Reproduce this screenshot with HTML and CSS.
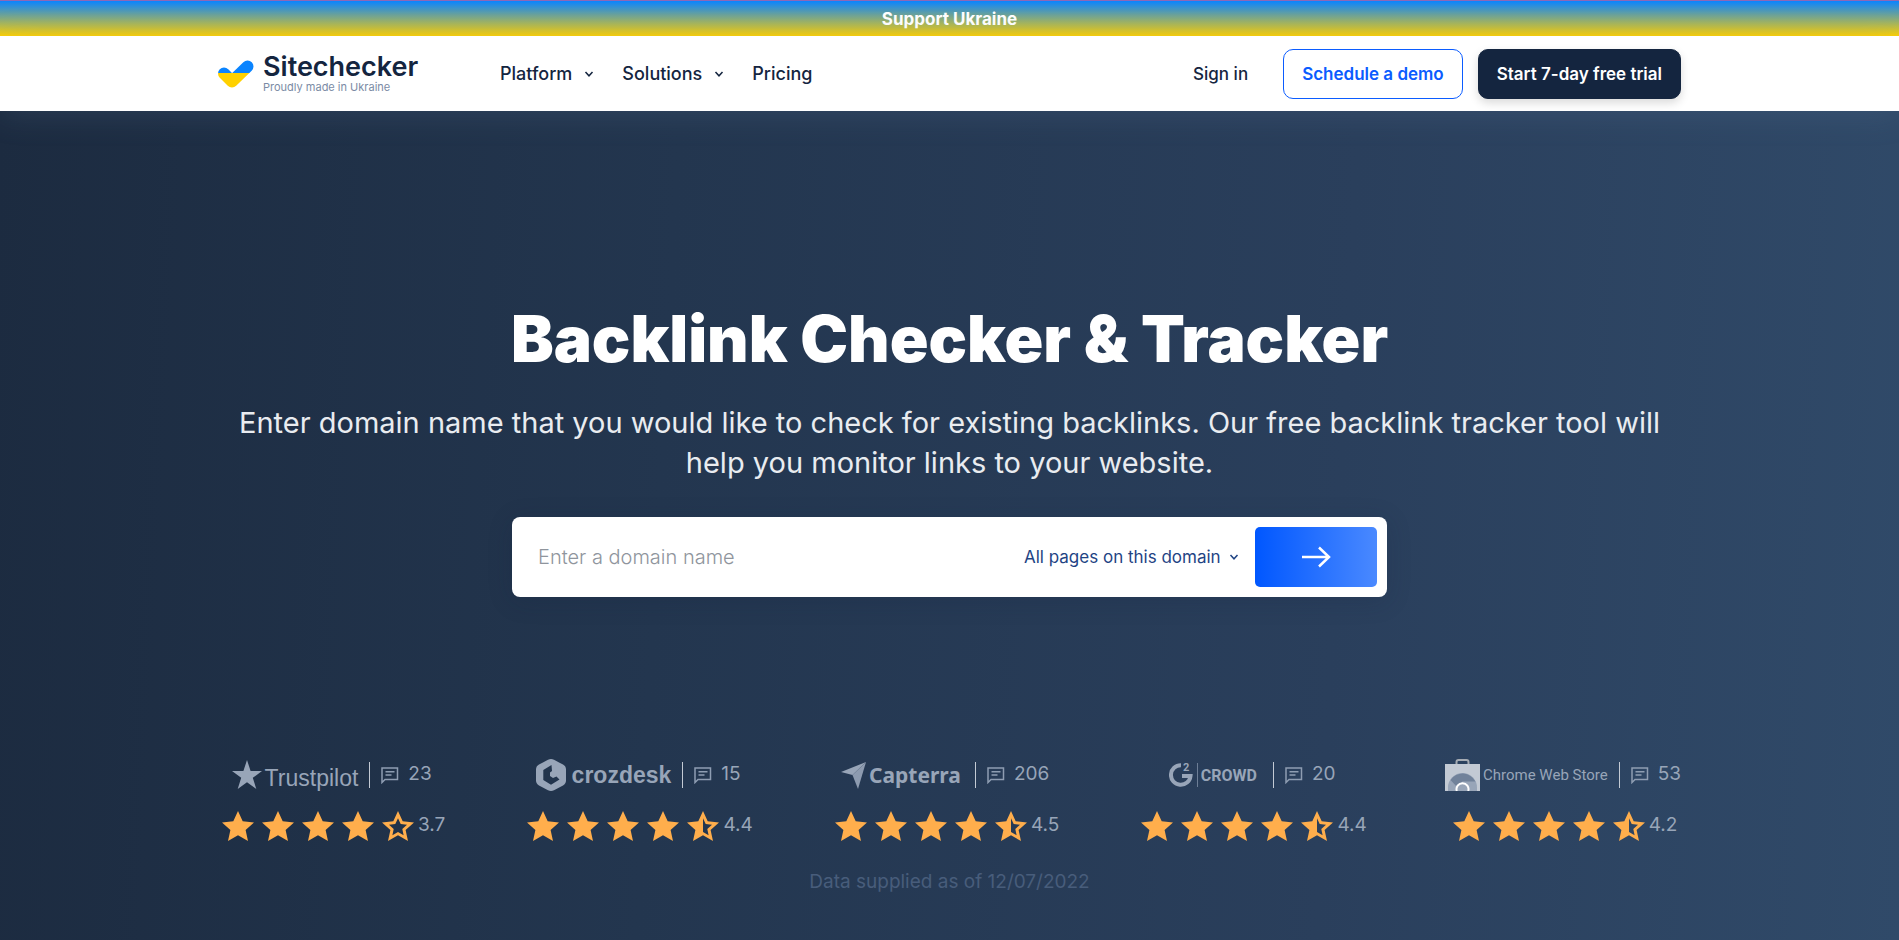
FILE: index.html
```html
<!DOCTYPE html>
<html lang="en">
  <head>
    <meta charset="UTF-8" />
    <meta name="viewport" content="width=device-width, initial-scale=1.0" />
    <title>Backlink Checker &amp; Tracker</title>
    <link rel="stylesheet" href="styles.css">
  </head>
  <body>
    <!-- shared icons -->
    <svg class="sprite" aria-hidden="true">
      <symbol id="star" viewBox="0 0 40 40">
        <path d="M20 5 24.7 15.2 36 16.4 27.6 23.9 30 35 20 29.3 10 35 12.4 23.9 4 16.4 15.3 15.2z" fill="#ffae4c" />
      </symbol>
      <symbol id="star-empty" viewBox="0 0 40 40">
        <path fill-rule="evenodd" d="M20 5 24.7 15.2 36 16.4 27.6 23.9 30 35 20 29.3 10 35 12.4 23.9 4 16.4 15.3 15.2z M20 12.2 17.3 18 11 18.8 15.7 23 14.4 29.2 20 26 25.6 29.2 24.3 23 29 18.8 22.7 18z" fill="#ffae4c" />
      </symbol>
      <symbol id="star-half" viewBox="0 0 40 40">
        <path fill-rule="evenodd" d="M20 5 24.7 15.2 36 16.4 27.6 23.9 30 35 20 29.3 10 35 12.4 23.9 4 16.4 15.3 15.2z M20 12.2V26l5.6 3.2L24.3 23 29 18.8 22.7 18z" fill="#ffae4c" />
      </symbol>
      <symbol id="comment" viewBox="0 0 18 18">
        <path d="M1 16.500V2h15.500v11.500H4z" fill="none" stroke="#8e9db2" stroke-width="1.500" />
        <path d="M4.500 5.800h9M4.500 9h6" stroke="#8e9db2" stroke-width="1.500" />
      </symbol>
      <symbol id="chevron" viewBox="0 0 10 10">
        <path d="M1.500 3 5 6.800 8.500 3" fill="none" stroke="currentColor" stroke-width="1.500" />
      </symbol>
    </svg>

    <a class="support" href="#">Support Ukraine</a>

    <header class="header">
      <div class="container header-inner">
        <a class="logo" href="#">
          <svg class="logo-mark" width="36" height="28" viewBox="0 0 36 28">
            <defs>
              <linearGradient id="flag" gradientUnits="userSpaceOnUse" x1="0" y1="0" x2="0" y2="28">
                <stop offset="0.480" stop-color="#0a84ff" />
                <stop offset="0.480" stop-color="#ffd100" />
              </linearGradient>
            </defs>
            <path d="M6 13.500 14 21.500 29.500 6.500" fill="none" stroke="url(#flag)" stroke-width="12" stroke-linecap="round" stroke-linejoin="round" />
          </svg>
          <span class="logo-text">
            <span class="logo-name">Sitechecker</span>
            <span class="logo-note">Proudly made in Ukraine</span>
          </span>
        </a>
        <nav class="nav">
          <a href="#">Platform <svg class="chevron"><use href="#chevron" /></svg></a>
          <a href="#">Solutions <svg class="chevron"><use href="#chevron" /></svg></a>
          <a href="#">Pricing</a>
        </nav>
        <div class="actions">
          <a class="signin" href="#">Sign in</a>
          <button type="button" class="btn btn-outline">Schedule a demo</button>
          <button type="button" class="btn btn-dark">Start 7-day free trial</button>
        </div>
      </div>
    </header>

    <main class="hero">
      <div class="container">
        <h1>Backlink Checker &amp; Tracker</h1>
        <p class="lead">Enter domain name that you would like to check for existing backlinks. Our free backlink tracker tool will help you monitor links to your website.</p>

        <form class="search" action="#">
          <input type="text" name="domain" aria-label="Domain name" placeholder="Enter a domain name" />
          <div class="scope">
            <select name="scope" aria-label="Scope">
              <option>All pages on this domain</option>
              <option>Exact URL</option>
            </select>
            <svg class="scope-arrow"><use href="#chevron" /></svg>
          </div>
          <button type="submit" aria-label="Check">
            <svg width="30" height="22" viewBox="0 0 30 22">
              <path d="M1 11h27M18 1.500 28 11 18 20.500" fill="none" stroke="#fff" stroke-width="2.500" />
            </svg>
          </button>
        </form>

        <div class="ratings">
          <div class="rating">
            <div class="source">
              <div class="brand trustpilot">
                <svg width="30" height="30" viewBox="0 0 30 30">
                  <path d="M15 0 18.600 11H30l-9.200 6.800L24.300 29 15 22.200 5.700 29 9.200 17.800 0 11h11.400z" fill="#98a5b8" />
                </svg>
                <span>Trustpilot</span>
              </div>
              <svg class="comment"><use href="#comment" /></svg>
              <span class="count">23</span>
            </div>
            <div class="stars">
              <svg><use href="#star" /></svg><svg><use href="#star" /></svg><svg><use href="#star" /></svg><svg><use href="#star" /></svg><svg><use href="#star-empty" /></svg>
              <span class="score">3.7</span>
            </div>
          </div>

          <div class="rating">
            <div class="source">
              <div class="brand crozdesk">
                <svg width="30" height="32" viewBox="0 0 30 32">
                  <path fill-rule="evenodd" d="M12 .8Q15-.8 18 .8L27 5.600Q30 7.300 30 10.500v11Q30 24.700 27 26.400L18 31.200Q15 32.800 12 31.200L3 26.400Q0 24.700 0 21.500v-11Q0 7.300 3 5.600z M15.500 6 7.300 11v10L15 25.700 23.500 20.500 20.500 17.500 17 19 14 17v-3.500L16 12z" fill="#98a5b8" />
                </svg>
                <span>crozdesk</span>
              </div>
              <svg class="comment"><use href="#comment" /></svg>
              <span class="count">15</span>
            </div>
            <div class="stars">
              <svg><use href="#star" /></svg><svg><use href="#star" /></svg><svg><use href="#star" /></svg><svg><use href="#star" /></svg><svg><use href="#star-half" /></svg>
              <span class="score">4.4</span>
            </div>
          </div>

          <div class="rating">
            <div class="source">
              <div class="brand capterra">
                <svg width="25" height="27" viewBox="0 0 25 27">
                  <path d="M0 10 25 0 11.500 13z" fill="#98a5b8" />
                  <path d="M25 0 17 27 11.500 13z" fill="#8d9bb0" />
                </svg>
                <span>Capterra</span>
              </div>
              <svg class="comment"><use href="#comment" /></svg>
              <span class="count">206</span>
            </div>
            <div class="stars">
              <svg><use href="#star" /></svg><svg><use href="#star" /></svg><svg><use href="#star" /></svg><svg><use href="#star" /></svg><svg><use href="#star-half" /></svg>
              <span class="score">4.5</span>
            </div>
          </div>

          <div class="rating">
            <div class="source">
              <div class="brand crowd">
                <svg width="29" height="26" viewBox="0 0 29 26">
                  <path d="M12 3.200A9.800 9.800 0 1 0 21.500 14H13" fill="none" stroke="#98a5b8" stroke-width="4" />
                  <path d="M28.500 1v24" stroke="#6d7e96" stroke-width="1" />
                  <text x="14" y="9" font-size="11" font-weight="700" fill="#98a5b8">2</text>
                </svg>
                <span>CROWD</span>
              </div>
              <svg class="comment"><use href="#comment" /></svg>
              <span class="count">20</span>
            </div>
            <div class="stars">
              <svg><use href="#star" /></svg><svg><use href="#star" /></svg><svg><use href="#star" /></svg><svg><use href="#star" /></svg><svg><use href="#star-half" /></svg>
              <span class="score">4.4</span>
            </div>
          </div>

          <div class="rating">
            <div class="source">
              <div class="brand chrome">
                <svg width="35" height="32" viewBox="0 0 35 32">
                  <path d="M11.500 6V3Q11.500 1 13.500 1h8q2 0 2 2v3" fill="none" stroke="#a5abb3" stroke-width="2" />
                  <path d="M0 5h35v27H0z" fill="#c3cad4" />
                  <path d="M3 32V28.500a14.500 14.500 0 0 1 29 0V32z" fill="#98a5b8" />
                  <path d="M5.500 21a14.500 14.500 0 0 1 25 1.500H17.500l-6 5z" fill="#71829a" />
                  <path d="M11.800 32a6 6 0 1 1 11.400 0" fill="#98a5b8" stroke="#fff" stroke-width="2" />
                </svg>
                <span>Chrome Web Store</span>
              </div>
              <svg class="comment"><use href="#comment" /></svg>
              <span class="count">53</span>
            </div>
            <div class="stars">
              <svg><use href="#star" /></svg><svg><use href="#star" /></svg><svg><use href="#star" /></svg><svg><use href="#star" /></svg><svg><use href="#star-half" /></svg>
              <span class="score">4.2</span>
            </div>
          </div>
        </div>

        <p class="note">Data supplied as of 12/07/2022</p>
      </div>
    </main>
  </body>
</html>
```

FILE: styles.css
```css
* {
  box-sizing: border-box;
}
body {
  font-family: Inter, "Open Sans", sans-serif;
  margin: 0;
  padding: 0;
  color: #14253f;
  min-height: 100vh;
  display: flex;
  flex-direction: column;
}
a {
  color: inherit;
  text-decoration: none;
}
svg {
  flex-shrink: 0;
}
.sprite {
  position: absolute;
  width: 0;
  height: 0;
}
.container {
  width: 100%;
  max-width: 1463px;
  margin: 0 auto;
}

/* top bar */
.support {
  display: block;
  height: 36px;
  border-top: 1px solid #8e68b4;
  background: linear-gradient(#0a84ff, #ffd100);
  color: #fff;
  font-size: 17px;
  font-weight: 700;
  line-height: 36px;
  text-align: center;
}

/* header */
.header {
  position: relative;
  z-index: 1;
  height: 75px;
  background-color: #fff;
  box-shadow: 0 4px 32px rgba(100, 130, 165, 0.2);
}
.header-inner {
  display: flex;
  align-items: center;
  height: 100%;
}
.logo {
  display: flex;
  align-items: center;
  gap: 9px;
  width: 282px;
}
.logo-text {
  display: flex;
  flex-direction: column;
  padding-bottom: 2px;
}
.logo-name {
  font-size: 27px;
  font-weight: 600;
  line-height: 28px;
}
.logo-note {
  font-size: 11px;
  line-height: 12px;
  color: #7b8ba5;
}
.nav {
  display: flex;
  gap: 28px;
  font-size: 18px;
  font-weight: 500;
}
.nav a {
  display: flex;
  align-items: center;
  gap: 12px;
}
.chevron {
  width: 10px;
  height: 10px;
}
.actions {
  display: flex;
  align-items: center;
  gap: 15px;
  margin-left: auto;
}
.signin {
  font-size: 17px;
  font-weight: 500;
  margin-right: 20px;
}
.btn {
  height: 50px;
  padding: 0 18px;
  border: 1px solid #14253f;
  border-radius: 10px;
  font-family: inherit;
  font-size: 17px;
  font-weight: 600;
  cursor: pointer;
}
.btn-outline {
  background-color: #fff;
  border-color: #0b5cff;
  color: #0b5cff;
}
.btn-dark {
  background-color: #14253f;
  color: #fff;
  box-shadow: 0 4px 10px rgba(0, 0, 0, 0.15);
}

/* hero */
.hero {
  flex: 1;
  padding: 192px 16px 44px;
  background: linear-gradient(93deg, #1c2b40 0%, #23364f 35%, #2a3f5c 70%, #304a69 100%);
}
h1 {
  margin: 0 0 28px;
  color: #fff;
  font-size: 64px;
  font-weight: 900;
  line-height: 72px;
  text-align: center;
}
.lead {
  margin: 0 0 34px;
  color: #e9ecf0;
  font-size: 29px;
  line-height: 40px;
  text-align: center;
}
.search {
  display: flex;
  align-items: center;
  max-width: 875px;
  height: 80px;
  margin: 0 auto 161px;
  padding: 10px;
  background-color: #fff;
  border-radius: 8px;
  box-shadow: 0 4px 24px rgba(20, 37, 63, 0.2);
}
.search input {
  flex: 1;
  min-width: 0;
  height: 60px;
  padding: 0 16px;
  border: none;
  outline: none;
  font-family: inherit;
  font-size: 20px;
  font-weight: 300;
}
.search input::placeholder {
  color: #8f959d;
}
.scope {
  display: flex;
  align-items: center;
  gap: 8px;
  margin-right: 16px;
}
.scope select {
  appearance: none;
  padding: 0;
  border: none;
  background: none;
  color: #1f4484;
  font-family: inherit;
  font-size: 17px;
}
.scope-arrow {
  width: 10px;
  height: 10px;
  color: #1f4484;
}
.search button {
  display: flex;
  align-items: center;
  justify-content: center;
  width: 122px;
  height: 60px;
  border: none;
  border-radius: 5px;
  background: linear-gradient(90deg, #0057ff, #4a89ff);
  cursor: pointer;
}

/* ratings */
.ratings {
  display: flex;
  justify-content: space-between;
}
.rating {
  display: flex;
  flex-direction: column;
  align-items: center;
  gap: 14px;
}
.source {
  display: flex;
  align-items: center;
  height: 34px;
  color: #98a5b8;
}
.brand {
  display: flex;
  align-items: center;
  height: 26px;
  gap: 3px;
  padding-right: 11px;
  border-right: 1px solid #c3cad4;
}
.trustpilot {
  font-family: "Liberation Sans", sans-serif;
  font-size: 23px;
}
.trustpilot span {
  padding-top: 6px;
}
.crozdesk {
  gap: 6px;
  font-family: "Liberation Sans", sans-serif;
  font-size: 23px;
  font-weight: 700;
}
.capterra {
  padding-right: 14px;
  font-family: "Noto Sans", sans-serif;
  font-size: 21px;
  font-weight: 700;
}
.crowd {
  padding-right: 16px;
  font-family: Roboto, sans-serif;
  font-size: 16px;
  font-weight: 700;
}
.chrome {
  font-family: Roboto, sans-serif;
  font-size: 15px;
}
.comment {
  width: 18px;
  height: 18px;
  margin: 0 9px 0 11px;
}
.count {
  padding-bottom: 4px;
  font-size: 19px;
}
.stars {
  display: flex;
  align-items: center;
  color: #98a5b8;
  font-size: 19px;
}
.stars svg {
  width: 40px;
  height: 40px;
}
.score {
  padding-bottom: 4px;
}
.note {
  margin: 22px 0 0;
  color: #485d7b;
  font-size: 19px;
  line-height: 28px;
  text-align: center;
}
```
